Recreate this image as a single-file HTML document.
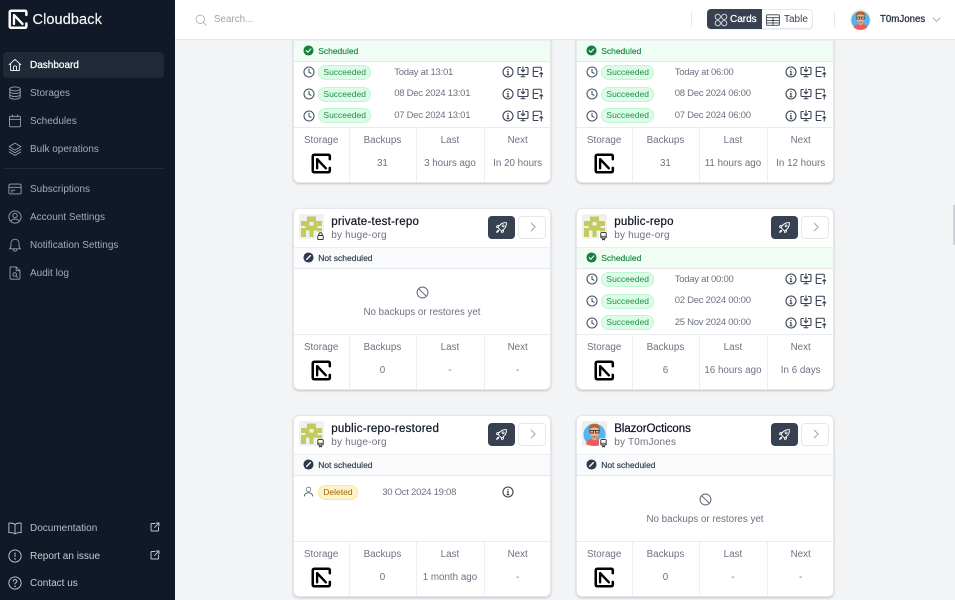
<!DOCTYPE html>
<html><head><meta charset="utf-8"><title>Cloudback</title>
<style>
*{box-sizing:border-box}
html,body{margin:0;padding:0;width:955px;height:600px;overflow:hidden;background:#f3f4f6;font-family:"Liberation Sans",sans-serif;color:#6b7280;font-size:10px}
.abs,.card,.card>*,.nav,.top>*{position:absolute}
svg.i{fill:none;stroke:currentColor;stroke-width:1.5;stroke-linecap:round;stroke-linejoin:round;display:block}
#side{position:absolute;left:0;top:0;width:175px;height:600px;background:#111827}
.nav{left:30px;height:14px;line-height:14px;font-size:10px;color:#a3abb8;white-space:nowrap;margin-top:1px}
.ni{position:absolute;left:8px;width:14px;height:14px;color:#9ca3af}
.top{position:absolute;left:175px;top:0;width:780px;height:40px;background:#fff;border-bottom:1px solid #e5e7eb;z-index:5}
.card{width:258.6px;height:182.2px;background:#fff;border:1px solid #e5e7eb;border-radius:6px;box-shadow:0 1px 2px rgba(0,0,0,.2);overflow:hidden}
.av{left:5px;top:5.500px;width:25px;height:25px}
.tt{left:37.5px;top:6px;font-size:11.5px;line-height:14px;color:#111827;white-space:nowrap;letter-spacing:.25px;-webkit-text-stroke:.25px #111827}
.tt.cap{letter-spacing:-.05px}
.by{left:37.5px;top:20.500px;font-size:10px;line-height:13px;color:#6b7280;white-space:nowrap;letter-spacing:.2px}
.b1{left:194px;top:7.5px;width:27.6px;height:22.4px;background:#374151;border-radius:4px;color:#fff}
.b1 svg{position:absolute;left:7.5px;top:4.8px}
.b2{left:224.6px;top:7.5px;width:27.4px;height:22.4px;background:#fff;border:1px solid #e5e7eb;border-radius:4px;color:#9ca3af}
.b2 svg{position:absolute;left:7.5px;top:4.2px}
.st{left:0;top:38px;width:100%;height:22px;border-top:1px solid #eceef1;border-bottom:1px solid #e5e7eb;font-size:8.5px;line-height:20px;padding-left:24.5px}
.st svg{position:absolute;left:9.5px;top:4.5px}
.st.g{background:#f0fdf4;color:#1f8f47;-webkit-text-stroke:.2px #1f8f47}
.st.n{background:#f9fafb;color:#374151;-webkit-text-stroke:.2px #374151}
.ci{left:9.5px;width:12px;height:12px;color:#4b5563}
.bd{left:24.5px;width:53px;height:15px;border-radius:8px;font-size:8.5px;line-height:13px;text-align:center;background:#dcfce7;border:1px solid #bbf7d0;color:#1f8f47}
.dt{left:100.5px;font-size:9.5px;letter-spacing:-.25px;line-height:14px;color:#6b7280;white-space:nowrap}
.r .dt{left:98px}
.x1,.x2,.x3{width:12px;height:12px;color:#374151}
.x1{left:208.5px}.x2{left:223.5px}.x3{left:238.5px}
.ft{left:0;top:125.5px;width:100%;height:1px;background:#e9ebee}
.vl{top:125.5px;width:1px;height:57px;background:#eceef1}
.lb,.vv{text-align:center;white-space:nowrap;font-size:9.8px;line-height:14px}
.lb{top:132.300px;color:#6b7280}
.vv{top:155px;color:#6b7280}
.c1{left:0;width:55px}.c2{left:55px;width:67.5px}.c3{left:122.5px;width:67.5px}.c4{left:190px;width:68px}
.lg{left:17px;top:151px;width:21px;height:21px;color:#000}
.em{left:0;top:97px;width:100%;text-align:center;font-size:9.8px;line-height:14px;color:#6b7280}
.ban{left:122px;top:77.5px;width:13px;height:13px;color:#6b7280}
</style></head><body>
<svg width="0" height="0" style="position:absolute">
<defs>
<symbol id="logo" viewBox="0 0 24 24"><path d="M21.500 7V3.800Q21.500 2 19.500 2H4Q2 2 2 4V20Q2 22 4 22H19.500Q21.500 22 21.500 20V17" fill="none" stroke="currentColor" stroke-width="2.900" stroke-linecap="round"/><path d="M7 7V17.500M7 7L17 17.500" fill="none" stroke="currentColor" stroke-width="2.700" stroke-linecap="round"/></symbol>
<symbol id="clock" viewBox="0 0 24 24"><circle cx="12" cy="12" r="10" fill="none" stroke="currentColor" stroke-width="2.200"/><path d="M12 6.500V12.500L16 14.500" fill="none" stroke="currentColor" stroke-width="2.200" stroke-linecap="round"/></symbol>
<symbol id="info" viewBox="0 0 24 24"><circle cx="12" cy="12" r="10" fill="none" stroke="currentColor" stroke-width="2.200"/><path d="M10.500 11H12V17.500M10 17.500H14" fill="none" stroke="currentColor" stroke-width="2.200" stroke-linecap="round"/><circle cx="12" cy="7.300" r="1.300" fill="currentColor"/></symbol>
<symbol id="dl" viewBox="0 0 24 24"><path d="M7 3H3.500Q2 3 2 4.500V15Q2 17 4 17H20Q22 17 22 15V4.500Q22 3 20.500 3H17M8 21.500H16M12 17V21.500" fill="none" stroke="currentColor" stroke-width="2.200" stroke-linecap="round"/><path d="M12 1.500V11M8.500 8L12 11.500L15.500 8" fill="none" stroke="currentColor" stroke-width="2.200" stroke-linecap="round" stroke-linejoin="round"/></symbol>
<symbol id="ul" viewBox="0 0 24 24"><path d="M12 21H4Q2.500 21 2.500 19.500V4Q2.500 2.500 4 2.500H17Q18.500 2.500 18.500 4V9M2.500 11H12" fill="none" stroke="currentColor" stroke-width="2.200" stroke-linecap="round"/><path d="M18.500 22V13M15.500 16L18.500 13L21.500 16" fill="none" stroke="currentColor" stroke-width="2.200" stroke-linecap="round" stroke-linejoin="round"/></symbol>
<symbol id="ban" viewBox="0 0 24 24"><circle cx="12" cy="12" r="10" fill="none" stroke="currentColor" stroke-width="2"/><path d="M5 5L19 19" fill="none" stroke="currentColor" stroke-width="2"/></symbol>
<symbol id="rocket" viewBox="0 0 24 24"><path d="M9 15.500L5.500 12L8 8.500Q13 2.500 21 3Q21.500 11 15.500 16L12 18.500ZM8 8.500H4L2.500 11.500L5.500 12M15.500 16V20L12.500 21.500L12 18.500M6.500 17Q3.500 18 3 21Q6 20.500 7 17.500" fill="none" stroke="currentColor" stroke-width="1.700" stroke-linejoin="round" stroke-linecap="round"/><circle cx="15" cy="9" r="1.800" fill="none" stroke="currentColor" stroke-width="1.500"/></symbol>
<symbol id="chev" viewBox="0 0 14 14"><path d="M5 2.500L9.500 7L5 11.500" fill="none" stroke="currentColor" stroke-width="1.100" stroke-linecap="round" stroke-linejoin="round"/></symbol>
<symbol id="okc" viewBox="0 0 12 12"><circle cx="6" cy="6" r="5.500" fill="#15803d"/><path d="M3.500 6.200L5.300 7.900L8.500 4.300" fill="none" stroke="#fff" stroke-width="1.200" stroke-linecap="round" stroke-linejoin="round"/></symbol>
<symbol id="nos" viewBox="0 0 12 12"><circle cx="6" cy="6" r="5.500" fill="#2f3a4d"/><path d="M4 8L8 4" fill="none" stroke="#fff" stroke-width="1.500" stroke-linecap="round"/></symbol>
<symbol id="ident" viewBox="0 0 25 25"><rect width="25" height="25" rx="2" fill="#f0f0f0"/><g fill="#c4cb5d"><rect x="8" y="2.500" width="9" height="4.500"/><rect x="2" y="7" width="21" height="5"/><rect x="6.500" y="12" width="12" height="4.500"/><rect x="2" y="14" width="5" height="9"/><rect x="10.500" y="16.500" width="4" height="6.500"/><rect x="18" y="14" width="5" height="9"/></g><rect x="10.500" y="8" width="4" height="3.500" fill="#f0f0f0"/></symbol>
<symbol id="face" viewBox="0 0 25 25"><rect width="25" height="25" rx="2" fill="#eeeeee"/><circle cx="12.500" cy="13.500" r="11" fill="#55b4ec"/><path d="M4 23Q5 17.500 12.500 17.500Q20 17.500 21 23Q17 25 12.500 25Q8 25 4 23Z" fill="#ef5b5b"/><rect x="10.500" y="14" width="4" height="5" fill="#e7a77f"/><ellipse cx="12.500" cy="10.500" rx="5" ry="6" fill="#efb48c"/><path d="M7 9Q6.500 3 12.500 3Q18.500 3 18 9Q16 6.500 12.500 6.500Q9 6.500 7 9Z" fill="#b4622f"/><path d="M7 9.500H18M8 9.500h3.500v2.500h-3.500zM13.500 9.500h3.500v2.500h-3.500z" fill="none" stroke="#444" stroke-width=".9"/><path d="M9.500 14.500Q12.500 16.500 15.500 14.500Q14 16.500 12.500 16.500Q11 16.500 9.500 14.500Z" fill="#a9582b"/></symbol>
<symbol id="lock" viewBox="0 0 10 10"><rect width="10" height="10" rx="2" fill="#fff"/><rect x="2" y="4.500" width="6" height="4.500" rx="1" fill="none" stroke="#222" stroke-width="1"/><path d="M3.200 4.500V3Q3.200 1.300 5 1.300Q6.800 1.300 6.800 3V4.500" fill="none" stroke="#222" stroke-width="1"/></symbol>
<symbol id="repo" viewBox="0 0 10 10"><rect width="10" height="10" rx="2" fill="#fff"/><rect x="2" y="1.200" width="6" height="6" rx="1" fill="none" stroke="#222" stroke-width="1"/><path d="M2 5.300H8M4 7.500V9.300L5 8.600L6 9.300V7.500" fill="none" stroke="#222" stroke-width=".9"/></symbol>
</defs></svg>

<div id="side">
<svg class="abs" style="left:8px;top:9px;color:#fff" width="20.500" height="20.500"><use href="#logo"/></svg>
<div class="abs" style="left:32.500px;top:11px;font-size:14.500px;line-height:18px;color:#f3f4f6;letter-spacing:.1px;-webkit-text-stroke:.2px #f3f4f6">Cloudback</div>
<div class="abs" style="left:3px;top:52px;width:161px;height:25.500px;background:#1f2937;border-radius:4px"></div>
<div class="abs" style="left:3px;top:168px;width:161px;height:1px;background:#1f2937"></div>

<svg class="ni i" style="top:58px;color:#fff" viewBox="0 0 24 24"><path d="M2 11.500L12 2.500L22 11.500M4.500 9.500V21.500H19.500V9.500M9.500 21.500V15Q9.500 13.500 11 13.500H13Q14.500 13.500 14.500 15V21.500"/></svg>
<div class="nav" style="top:58px;color:#fff;-webkit-text-stroke:.25px #fff">Dashboard</div>
<svg class="ni i" style="top:86px" viewBox="0 0 24 24"><ellipse cx="12" cy="5" rx="9" ry="3.500"/><path d="M3 5V19C3 21 7 22.500 12 22.500S21 21 21 19V5M3 9.500C3 11.500 7 13 12 13S21 11.500 21 9.500M3 14.500C3 16.500 7 18 12 18S21 16.500 21 14.500"/></svg>
<div class="nav" style="top:86px">Storages</div>
<svg class="ni i" style="top:114px" viewBox="0 0 24 24"><rect x="2.500" y="4" width="19" height="18" rx="2"/><path d="M2.500 9H21.500M7.500 1.500V5M16.500 1.500V5"/></svg>
<div class="nav" style="top:113.500px">Schedules</div>
<svg class="ni i" style="top:141.500px" viewBox="0 0 24 24"><path d="M12 2L22 8L12 14L2 8ZM2 12.500L12 18.500L22 12.500M2 17L12 23L22 17"/></svg>
<div class="nav" style="top:141.500px">Bulk operations</div>

<svg class="ni i" style="top:182px" viewBox="0 0 24 24"><rect x="1.500" y="3.500" width="21" height="17" rx="2.500"/><path d="M1.500 9H22.500M5.500 14H12M5.500 17H8"/></svg>
<div class="nav" style="top:182px">Subscriptions</div>
<svg class="ni i" style="top:210px" viewBox="0 0 24 24"><circle cx="12" cy="12" r="10.500"/><circle cx="12" cy="9.500" r="3.800"/><path d="M5 19Q7 15.500 12 15.500T19 19"/></svg>
<div class="nav" style="top:210px">Account Settings</div>
<svg class="ni i" style="top:238px" viewBox="0 0 24 24"><path d="M2.500 18.500Q5 16.500 5 13V9.500C5 5 8 2 12 2S19 5 19 9.500V13Q19 16.500 21.500 18.500ZM9 18.500V19.500Q9 22.500 12 22.500T15 19.500V18.500"/></svg>
<div class="nav" style="top:238px">Notification Settings</div>
<svg class="ni i" style="top:266px" viewBox="0 0 24 24"><path d="M14 1.500H5Q3.500 1.500 3.500 3V21Q3.500 22.500 5 22.500H19Q20.500 22.500 20.500 21V8ZM14 1.500V8H20.500"/><circle cx="11.500" cy="14.500" r="3"/><path d="M14 17L16.500 19.500"/></svg>
<div class="nav" style="top:266px">Audit log</div>

<svg class="ni i" style="top:520.500px;color:#c2c7d0" viewBox="0 0 24 24"><path d="M12 6Q8 3 1.500 3.500V20Q8 19.500 12 22Q16 19.500 22.500 20V3.500Q16 3 12 6ZM12 6V22"/></svg>
<div class="nav" style="top:520.500px;color:#b8bec9">Documentation</div>
<svg class="abs i" style="left:149.500px;top:522px;color:#c2c7d0" width="10" height="10" viewBox="0 0 24 24"><path style="stroke-width:2.400" d="M12 3.500H4Q2.500 3.500 2.500 5V20Q2.500 21.500 4 21.500H19Q20.500 21.500 20.500 20V12M11 13L21.500 2.500M15 2.500H21.500V9"/></svg>
<svg class="ni i" style="top:548.500px;color:#d1d5db" viewBox="0 0 24 24"><circle cx="12" cy="12" r="10.500"/><path d="M12 6.500V13"/><circle cx="12" cy="17" r=".6"/></svg>
<div class="nav" style="top:548.500px;color:#c7ccd5">Report an issue</div>
<svg class="abs i" style="left:149.500px;top:550px;color:#c2c7d0" width="10" height="10" viewBox="0 0 24 24"><path style="stroke-width:2.400" d="M12 3.500H4Q2.500 3.500 2.500 5V20Q2.500 21.500 4 21.500H19Q20.500 21.500 20.500 20V12M11 13L21.500 2.500M15 2.500H21.500V9"/></svg>
<svg class="ni i" style="top:576px;color:#d1d5db" viewBox="0 0 24 24"><circle cx="12" cy="12" r="10.500"/><path d="M8.800 9Q9.200 6 12 6T15.300 9Q15.300 11 12 12.500V14"/><circle cx="12" cy="17.800" r=".6"/></svg>
<div class="nav" style="top:576px;color:#c7ccd5">Contact us</div>
</div>

<div class="top">
<svg class="i" style="left:20px;top:13.500px;color:#9ca3af" width="12" height="12" viewBox="0 0 24 24"><circle cx="10.500" cy="10.500" r="8.500"/><path d="M17 17L22.500 22.500"/></svg>
<div style="left:39px;top:13px;font-size:9.800px;line-height:14px;color:#9ca3af">Search...</div>
<div style="left:516px;top:12px;width:1px;height:15px;background:#e5e7eb"></div>
<div style="left:532.300px;top:9px;width:106px;height:20.400px;border:1px solid #e5e7eb;border-radius:4px;background:#fff;box-shadow:0 1px 1px rgba(0,0,0,.06)"></div>
<div style="left:532.300px;top:9px;width:54.500px;height:20.400px;background:#374151;border-radius:4px 0 0 4px"></div>
<svg class="i" style="left:539px;top:12.500px;color:#e5e7eb" width="14" height="14" viewBox="0 0 24 24"><circle cx="6.500" cy="6.500" r="4.500"/><circle cx="17.500" cy="6.500" r="4.500"/><circle cx="6.500" cy="17.500" r="4.500"/><circle cx="17.500" cy="17.500" r="4.500"/></svg>
<div style="left:555px;top:13px;font-size:10px;line-height:14px;color:#fff;-webkit-text-stroke:.25px #fff">Cards</div>
<svg class="i" style="left:591px;top:12.500px;color:#374151" width="14" height="14" viewBox="0 0 24 24"><rect x="1" y="3" width="22" height="18" rx="1.500"/><path d="M1 8H23M1 13H23M1 17H23M12 8V21"/></svg>
<div style="left:609px;top:13px;font-size:10px;line-height:14px;color:#374151">Table</div>
<div style="left:659px;top:12px;width:1px;height:15px;background:#e5e7eb"></div>
<svg style="left:674.500px;top:8.500px;border-radius:50%" width="21" height="21"><use href="#face"/></svg>
<div style="left:705px;top:13px;font-size:9.700px;line-height:14px;color:#1f2937;-webkit-text-stroke:.25px #1f2937">T0mJones</div>
<svg style="left:755.500px;top:13.500px;color:#9ca3af" width="11" height="11"><use href="#chev" transform="rotate(90 5.500 5.500)"/></svg>
</div>

<div class="abs" style="left:953px;top:205px;width:2px;height:40px;background:#d1d5db"></div>

<!-- Card 1 -->
<div class="card" style="left:292.700px;top:.700px">
<div class="st g"><svg width="11" height="11"><use href="#okc"/></svg>Scheduled</div>
<svg class="ci" style="top:64.500px"><use href="#clock"/></svg><div class="bd" style="top:63.200px">Succeeded</div><div class="dt" style="top:64px">Today at 13:01</div><svg class="x1" style="top:64.500px"><use href="#info"/></svg><svg class="x2" style="top:64.500px"><use href="#dl"/></svg><svg class="x3" style="top:64.500px"><use href="#ul"/></svg>
<svg class="ci" style="top:86px"><use href="#clock"/></svg><div class="bd" style="top:85px">Succeeded</div><div class="dt" style="top:85.500px">08 Dec 2024 13:01</div><svg class="x1" style="top:86px"><use href="#info"/></svg><svg class="x2" style="top:86px"><use href="#dl"/></svg><svg class="x3" style="top:86px"><use href="#ul"/></svg>
<svg class="ci" style="top:108px"><use href="#clock"/></svg><div class="bd" style="top:106.800px">Succeeded</div><div class="dt" style="top:107.500px">07 Dec 2024 13:01</div><svg class="x1" style="top:108px"><use href="#info"/></svg><svg class="x2" style="top:108px"><use href="#dl"/></svg><svg class="x3" style="top:108px"><use href="#ul"/></svg>
<div class="ft"></div><div class="vl" style="left:55px"></div><div class="vl" style="left:122.500px"></div><div class="vl" style="left:190px"></div>
<div class="lb c1">Storage</div><div class="lb c2">Backups</div><div class="lb c3">Last</div><div class="lb c4">Next</div>
<svg class="lg"><use href="#logo"/></svg><div class="vv c2">31</div><div class="vv c3">3 hours ago</div><div class="vv c4">In 20 hours</div>
</div>

<!-- Card 2 -->
<div class="card r" style="left:575.700px;top:.700px">
<div class="st g"><svg width="11" height="11"><use href="#okc"/></svg>Scheduled</div>
<svg class="ci" style="top:64.500px"><use href="#clock"/></svg><div class="bd" style="top:63.200px">Succeeded</div><div class="dt" style="top:64px">Today at 06:00</div><svg class="x1" style="top:64.500px"><use href="#info"/></svg><svg class="x2" style="top:64.500px"><use href="#dl"/></svg><svg class="x3" style="top:64.500px"><use href="#ul"/></svg>
<svg class="ci" style="top:86px"><use href="#clock"/></svg><div class="bd" style="top:85px">Succeeded</div><div class="dt" style="top:85.500px">08 Dec 2024 06:00</div><svg class="x1" style="top:86px"><use href="#info"/></svg><svg class="x2" style="top:86px"><use href="#dl"/></svg><svg class="x3" style="top:86px"><use href="#ul"/></svg>
<svg class="ci" style="top:108px"><use href="#clock"/></svg><div class="bd" style="top:106.800px">Succeeded</div><div class="dt" style="top:107.500px">07 Dec 2024 06:00</div><svg class="x1" style="top:108px"><use href="#info"/></svg><svg class="x2" style="top:108px"><use href="#dl"/></svg><svg class="x3" style="top:108px"><use href="#ul"/></svg>
<div class="ft"></div><div class="vl" style="left:55px"></div><div class="vl" style="left:122.500px"></div><div class="vl" style="left:190px"></div>
<div class="lb c1">Storage</div><div class="lb c2">Backups</div><div class="lb c3">Last</div><div class="lb c4">Next</div>
<svg class="lg"><use href="#logo"/></svg><div class="vv c2">31</div><div class="vv c3">11 hours ago</div><div class="vv c4">In 12 hours</div>
</div>

<!-- Card 3 -->
<div class="card" style="left:292.700px;top:207.700px">
<svg class="av"><use href="#ident"/></svg><svg class="abs" style="left:22.500px;top:22px" width="9" height="10"><use href="#lock"/></svg>
<div class="tt">private-test-repo</div><div class="by">by huge-org</div>
<div class="b1"><svg width="13" height="13"><use href="#rocket"/></svg></div><div class="b2"><svg width="12" height="12"><use href="#chev"/></svg></div>
<div class="st n"><svg width="11" height="11"><use href="#nos"/></svg>Not scheduled</div>
<svg class="ban"><use href="#ban"/></svg><div class="em">No backups or restores yet</div>
<div class="ft"></div><div class="vl" style="left:55px"></div><div class="vl" style="left:122.500px"></div><div class="vl" style="left:190px"></div>
<div class="lb c1">Storage</div><div class="lb c2">Backups</div><div class="lb c3">Last</div><div class="lb c4">Next</div>
<svg class="lg"><use href="#logo"/></svg><div class="vv c2">0</div><div class="vv c3">-</div><div class="vv c4">-</div>
</div>

<!-- Card 4 -->
<div class="card r" style="left:575.700px;top:207.700px">
<svg class="av"><use href="#ident"/></svg><svg class="abs" style="left:22.500px;top:22px" width="9" height="10"><use href="#repo"/></svg>
<div class="tt">public-repo</div><div class="by">by huge-org</div>
<div class="b1"><svg width="13" height="13"><use href="#rocket"/></svg></div><div class="b2"><svg width="12" height="12"><use href="#chev"/></svg></div>
<div class="st g"><svg width="11" height="11"><use href="#okc"/></svg>Scheduled</div>
<svg class="ci" style="top:64.500px"><use href="#clock"/></svg><div class="bd" style="top:63.200px">Succeeded</div><div class="dt" style="top:64px">Today at 00:00</div><svg class="x1" style="top:64.500px"><use href="#info"/></svg><svg class="x2" style="top:64.500px"><use href="#dl"/></svg><svg class="x3" style="top:64.500px"><use href="#ul"/></svg>
<svg class="ci" style="top:86px"><use href="#clock"/></svg><div class="bd" style="top:85px">Succeeded</div><div class="dt" style="top:85.500px">02 Dec 2024 00:00</div><svg class="x1" style="top:86px"><use href="#info"/></svg><svg class="x2" style="top:86px"><use href="#dl"/></svg><svg class="x3" style="top:86px"><use href="#ul"/></svg>
<svg class="ci" style="top:108px"><use href="#clock"/></svg><div class="bd" style="top:106.800px">Succeeded</div><div class="dt" style="top:107.500px">25 Nov 2024 00:00</div><svg class="x1" style="top:108px"><use href="#info"/></svg><svg class="x2" style="top:108px"><use href="#dl"/></svg><svg class="x3" style="top:108px"><use href="#ul"/></svg>
<div class="ft"></div><div class="vl" style="left:55px"></div><div class="vl" style="left:122.500px"></div><div class="vl" style="left:190px"></div>
<div class="lb c1">Storage</div><div class="lb c2">Backups</div><div class="lb c3">Last</div><div class="lb c4">Next</div>
<svg class="lg"><use href="#logo"/></svg><div class="vv c2">6</div><div class="vv c3">16 hours ago</div><div class="vv c4">In 6 days</div>
</div>

<!-- Card 5 -->
<div class="card" style="left:292.700px;top:414.700px">
<svg class="av"><use href="#ident"/></svg><svg class="abs" style="left:22.500px;top:22px" width="9" height="10"><use href="#repo"/></svg>
<div class="tt">public-repo-restored</div><div class="by">by huge-org</div>
<div class="b1"><svg width="13" height="13"><use href="#rocket"/></svg></div><div class="b2"><svg width="12" height="12"><use href="#chev"/></svg></div>
<div class="st n"><svg width="11" height="11"><use href="#nos"/></svg>Not scheduled</div>
<svg class="abs i" style="left:9.500px;top:70.500px;color:#4b5563" width="11" height="11" viewBox="0 0 24 24"><circle cx="12" cy="7.500" r="5"/><path style="stroke-width:2" d="M3 22Q4 14.500 12 14.500T21 22"/></svg>
<div class="bd" style="top:69px;width:39.500px;background:#fef3c7;border-color:#fde68a;color:#a16207">Deleted</div>
<div class="dt" style="top:70px;left:88.500px">30 Oct 2024 19:08</div>
<svg class="x1" style="top:70px"><use href="#info"/></svg>
<div class="ft"></div><div class="vl" style="left:55px"></div><div class="vl" style="left:122.500px"></div><div class="vl" style="left:190px"></div>
<div class="lb c1">Storage</div><div class="lb c2">Backups</div><div class="lb c3">Last</div><div class="lb c4">Next</div>
<svg class="lg"><use href="#logo"/></svg><div class="vv c2">0</div><div class="vv c3">1 month ago</div><div class="vv c4">-</div>
</div>

<!-- Card 6 -->
<div class="card" style="left:575.700px;top:414.700px">
<svg class="av"><use href="#face"/></svg><svg class="abs" style="left:22.500px;top:22px" width="9" height="10"><use href="#repo"/></svg>
<div class="tt cap">BlazorOcticons</div><div class="by">by T0mJones</div>
<div class="b1"><svg width="13" height="13"><use href="#rocket"/></svg></div><div class="b2"><svg width="12" height="12"><use href="#chev"/></svg></div>
<div class="st n"><svg width="11" height="11"><use href="#nos"/></svg>Not scheduled</div>
<svg class="ban"><use href="#ban"/></svg><div class="em">No backups or restores yet</div>
<div class="ft"></div><div class="vl" style="left:55px"></div><div class="vl" style="left:122.500px"></div><div class="vl" style="left:190px"></div>
<div class="lb c1">Storage</div><div class="lb c2">Backups</div><div class="lb c3">Last</div><div class="lb c4">Next</div>
<svg class="lg"><use href="#logo"/></svg><div class="vv c2">0</div><div class="vv c3">-</div><div class="vv c4">-</div>
</div>
</body></html>
